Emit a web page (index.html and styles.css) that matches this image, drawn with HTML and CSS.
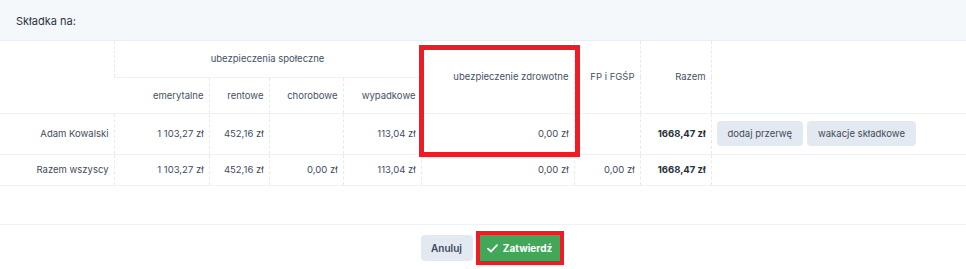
FILE: index.html
```html
<!DOCTYPE html>
<html lang="pl">
<head>
    <meta charset="utf-8">
    <title>Składka na</title>
    <link rel="stylesheet" href="styles.css">
</head>
<body>
    <div class="panel">
        <div class="panel-head">Składka na:</div>

        <div class="table-wrap">
            <table class="contrib">
                <colgroup>
                    <col class="c-name">
                    <col class="c-emer">
                    <col class="c-rent">
                    <col class="c-chor">
                    <col class="c-wyp">
                    <col class="c-zdr">
                    <col class="c-fp">
                    <col class="c-sum">
                    <col class="c-act">
                </colgroup>
                <thead>
                    <tr class="head-top">
                        <th rowspan="2"></th>
                        <th colspan="4" class="group">ubezpieczenia społeczne</th>
                        <th rowspan="2">ubezpieczenie zdrowotne</th>
                        <th rowspan="2">FP i FGŚP</th>
                        <th rowspan="2">Razem</th>
                        <th rowspan="2" class="act"></th>
                    </tr>
                    <tr class="head-sub">
                        <th>emerytalne</th>
                        <th>rentowe</th>
                        <th>chorobowe</th>
                        <th>wypadkowe</th>
                    </tr>
                </thead>
                <tbody>
                    <tr class="row-person">
                        <td>Adam Kowalski</td>
                        <td>1 103,27 zł</td>
                        <td>452,16 zł</td>
                        <td></td>
                        <td>113,04 zł</td>
                        <td>0,00 zł</td>
                        <td></td>
                        <td class="total">1668,47 zł</td>
                        <td class="act">
                            <div class="act-buttons">
                                <button class="btn-soft">dodaj przerwę</button>
                                <button class="btn-soft">wakacje składkowe</button>
                            </div>
                        </td>
                    </tr>
                    <tr class="row-sum">
                        <td>Razem wszyscy</td>
                        <td>1 103,27 zł</td>
                        <td>452,16 zł</td>
                        <td>0,00 zł</td>
                        <td>113,04 zł</td>
                        <td>0,00 zł</td>
                        <td>0,00 zł</td>
                        <td class="total">1668,47 zł</td>
                        <td class="act"></td>
                    </tr>
                </tbody>
            </table>
            <!-- highlight drawn over the health insurance column -->
            <div class="mark mark-zdr"></div>
        </div>

        <div class="panel-foot">
            <button class="btn-cancel">Anuluj</button>
            <span class="mark-wrap">
                <button class="btn-ok">
                    <svg class="ico" width="11" height="9" viewBox="0 0 11 9">
                        <path d="M1 4.6 L4 7.5 L10 1.2" fill="none" stroke="#ffffff" stroke-width="1.8" stroke-linecap="round" stroke-linejoin="round"/>
                    </svg>
                    Zatwierdź
                </button>
            </span>
        </div>
    </div>
</body>
</html>
```

FILE: styles.css
```css
body
{
    margin: 0;
    font-family: Inter, "Liberation Sans", sans-serif;
    background: #FFFFFF;
    color: #3f4b5c;
}
.panel
{
    width: 966px;
}
.panel-head
{
    height: 41px;
    box-sizing: border-box;
    padding: 14px 16px 0 16px;
    background: #f5f8fb;
    border-bottom: 1px solid #e9eef4;
    font-size: 11px;
    color: #2a3444;
}
.table-wrap
{
    position: relative;
    height: 183px;
}
.contrib
{
    width: 966px;
    table-layout: fixed;
    border-collapse: collapse;
    font-size: 9.5px;
}
.c-name { width: 114px; }
.c-emer { width: 95px; }
.c-rent { width: 60px; }
.c-chor { width: 74px; }
.c-wyp  { width: 78px; }
.c-zdr  { width: 153px; }
.c-fp   { width: 66px; }
.c-sum  { width: 71px; }
.c-act  { width: 255px; }
.contrib th,
.contrib td
{
    padding: 0 5px;
    text-align: right;
    font-weight: normal;
    border-left: 1px dashed #e6eaf0;
    white-space: nowrap;
}
.contrib th:first-child,
.contrib td:first-child
{
    border-left: none;
}
.contrib th
{
    color: #465264;
}
.contrib th.group
{
    text-align: center;
    border-bottom: 1px solid #eef1f6;
}
.head-top
{
    height: 36px;
}
.head-sub
{
    height: 36px;
}
.contrib thead tr.head-sub th
{
    border-bottom: 1px solid #eef1f6;
}
.contrib thead tr.head-top th[rowspan]
{
    border-bottom: 1px solid #eef1f6;
}
.row-person
{
    height: 41px;
    border-bottom: 1px solid #eef1f6;
}
.row-sum
{
    height: 31px;
    border-bottom: 1px solid #eef1f6;
}
.contrib td.total
{
    font-weight: 700;
    color: #262f3c;
}
.contrib td.act,
.contrib th.act
{
    text-align: left;
}
.act-buttons
{
    display: flex;
    gap: 4px;
}
.btn-soft
{
    height: 25px;
    padding: 0 11px;
    border: none;
    border-radius: 4px;
    background: #e3e9f0;
    color: #3f4b5c;
    font-family: inherit;
    font-size: 9.5px;
}
.mark
{
    position: absolute;
    border: 5px solid #ee1c25;
}
.mark-zdr
{
    left: 419px;
    top: 4px;
    width: 151px;
    height: 102px;
}
.panel-foot
{
    border-top: 1px solid #eef1f6;
    display: flex;
    justify-content: center;
    align-items: center;
    gap: 3px;
    padding: 6px 0 4px 18px;
}
.btn-cancel
{
    height: 26px;
    width: 52px;
    border: none;
    border-radius: 4px;
    background: #e3e9f0;
    color: #3a475a;
    font-family: inherit;
    font-size: 10px;
    font-weight: 600;
}
.mark-wrap
{
    display: inline-block;
    border: 4px solid #ee1c25;
    line-height: 0;
}
.btn-ok
{
    height: 26px;
    width: 80px;
    border: none;
    background: #43a75a;
    color: #FFFFFF;
    font-family: inherit;
    font-size: 10px;
    font-weight: 700;
    display: inline-flex;
    align-items: center;
    justify-content: center;
    gap: 5px;
}
```
